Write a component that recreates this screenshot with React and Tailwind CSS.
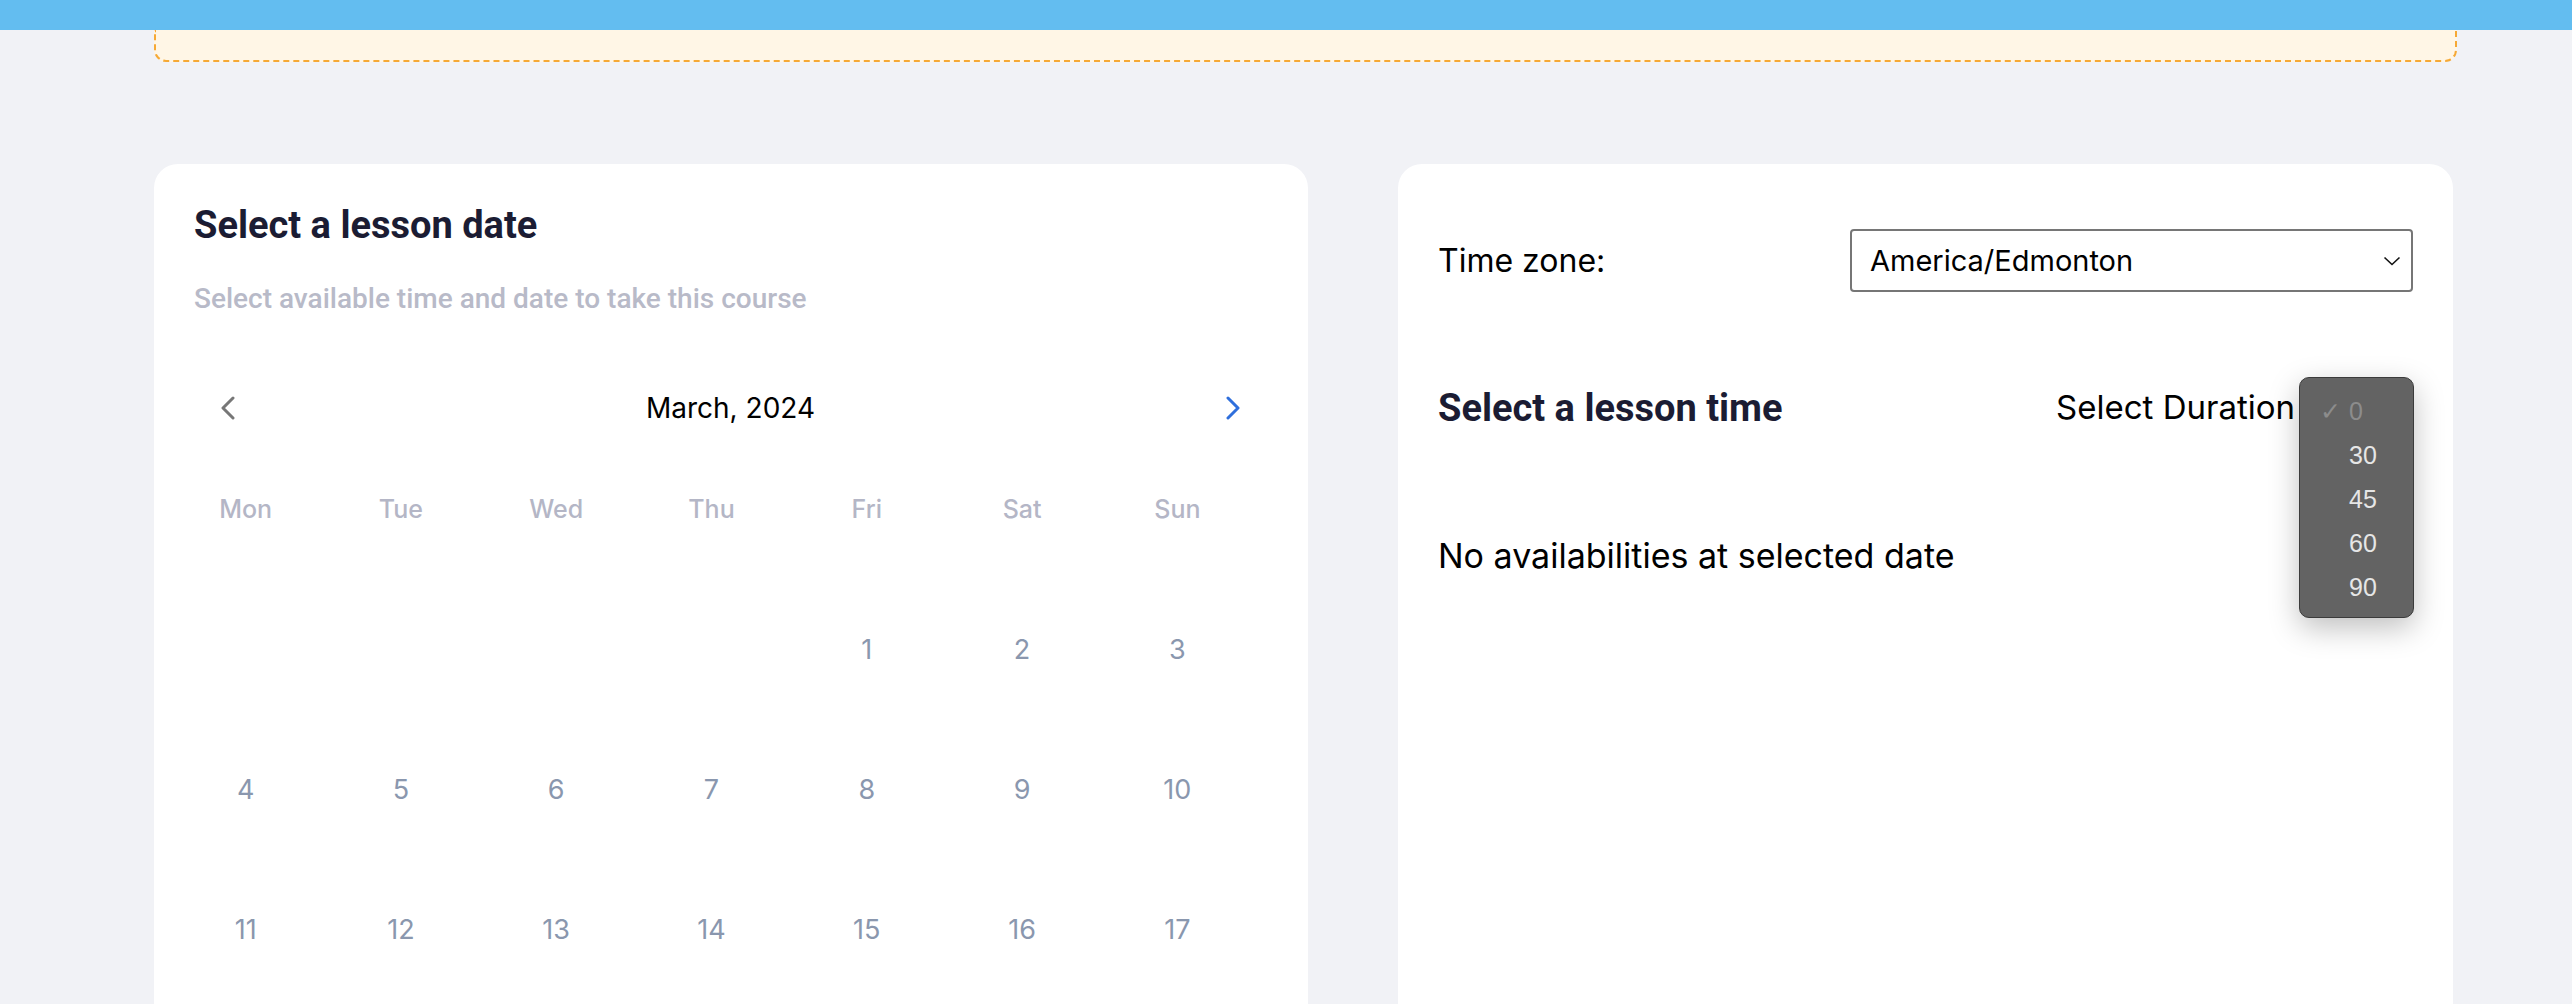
import { useState } from 'react'

const WEEKDAYS = ['Mon', 'Tue', 'Wed', 'Thu', 'Fri', 'Sat', 'Sun']
const DURATIONS = [0, 30, 45, 60, 90]

// March 2024 starts on a Friday
const cells = [...Array(4).fill(null), ...Array.from({ length: 31 }, (_, i) => i + 1)]

function Chevron({ dir = 'left', className = '' }) {
  return (
    <svg width="16" height="24" viewBox="0 0 16 24" fill="none" className={className}>
      <polyline
        points={dir === 'left' ? '13,2 3,12 13,22' : '3,2 13,12 3,22'}
        stroke="currentColor"
        strokeWidth="3"
        strokeLinecap="round"
        strokeLinejoin="round"
      />
    </svg>
  )
}

function Calendar() {
  return (
    <div className="ml-[14px] w-[1087px] font-[Inter,sans-serif]">
      {/* Month switcher */}
      <div className="flex items-center h-[60px] mt-[65px] pl-[52px] pr-[14px]">
        <button className="text-[#777777]">
          <Chevron dir="left" />
        </button>
        <div className="flex-1 text-center text-[28px] text-black">March, 2024</div>
        <button className="text-[#2f6fdc]">
          <Chevron dir="right" />
        </button>
      </div>

      {/* Weekday header */}
      <div className="grid grid-cols-7 h-[140px] mt-[2px] items-center">
        {WEEKDAYS.map(d => (
          <div key={d} className="text-center text-[25px] font-medium text-[#b4b6c6]">{d}</div>
        ))}
      </div>

      {/* Days */}
      <div className="grid grid-cols-7">
        {cells.map((d, i) => (
          <div key={i} className="h-[140px] flex items-center justify-center text-[27px] text-[#8a97ae]">
            {d}
          </div>
        ))}
      </div>
    </div>
  )
}

function DurationSelect() {
  const [open] = useState(true)
  return (
    <div className="relative flex items-center h-[60px]">
      <span className="text-[33px] text-black">Select Duration</span>
      <div className="ml-[5px] w-[113px] h-[60px]" />
      {open && (
        <div className="absolute right-[-1px] top-[-1px] w-[115px] h-[241px] rounded-[10px] bg-[#636363] border border-[#3b3b3b] shadow-[0_10px_30px_rgba(0,0,0,0.25)] py-[12px] font-['Liberation_Sans',sans-serif] text-[25px]">
          {DURATIONS.map(v => (
            <div key={v} className="h-[44px] flex items-center">
              <span className="w-[49px] flex justify-end pr-[8px] text-[#8c8c8c]">{v === 0 ? '✓' : ''}</span>
              <span className={v === 0 ? 'text-[#8c8c8c]' : 'text-[#e6e6e6]'}>{v}</span>
            </div>
          ))}
        </div>
      )}
    </div>
  )
}

export default function App() {
  return (
    <div className="h-screen overflow-hidden bg-[#f1f2f6]">
      <div className="h-[30px] bg-[#63bdf0]" />

      <div className="pl-[154px] pr-[115px]">
        {/* Notice box (scrolled) */}
        <div className="h-[32px] bg-[#fff6e6] border-2 border-t-0 border-dashed border-[#f6a935] rounded-b-[12px]" />

        <div className="mt-[102px] flex gap-[90px]">
          {/* Date card */}
          <div className="w-[1154px] h-[1200px] bg-white rounded-[24px] pt-[42px]">
            <h2 className="px-[40px] font-[Roboto,sans-serif] font-bold text-[38px] leading-none text-[#1b1c33]">
              Select a lesson date
            </h2>
            <p className="px-[40px] mt-[41px] font-[Roboto,sans-serif] font-medium text-[28px] leading-none text-[#b8bac8]">
              Select available time and date to take this course
            </p>
            <Calendar />
          </div>

          {/* Time card */}
          <div className="w-[1055px] h-[1200px] bg-white rounded-[24px] px-[40px] pt-[65px] font-[Inter,sans-serif]">
            <div className="flex items-center justify-between">
              <span className="text-[32px] text-black">Time zone:</span>
              <div className="w-[563px] h-[63px] border-2 border-[#767676] rounded-[4px] flex items-center justify-between pl-[18px] pr-[10px]">
                <span className="text-[29px] text-black">America/Edmonton</span>
                <svg width="18" height="10" viewBox="0 0 18 10" fill="none">
                  <polyline points="1.5,1.5 9,8.5 16.5,1.5" stroke="#111" strokeWidth="1.6" />
                </svg>
              </div>
            </div>

            <div className="mt-[86px] flex items-center justify-between h-[60px]">
              <h2 className="font-[Roboto,sans-serif] font-bold text-[38px] leading-none text-[#1b1c33]">
                Select a lesson time
              </h2>
              <DurationSelect />
            </div>

            <p className="mt-[101px] text-[34px] text-black leading-none">No availabilities at selected date</p>
          </div>
        </div>
      </div>
    </div>
  )
}
